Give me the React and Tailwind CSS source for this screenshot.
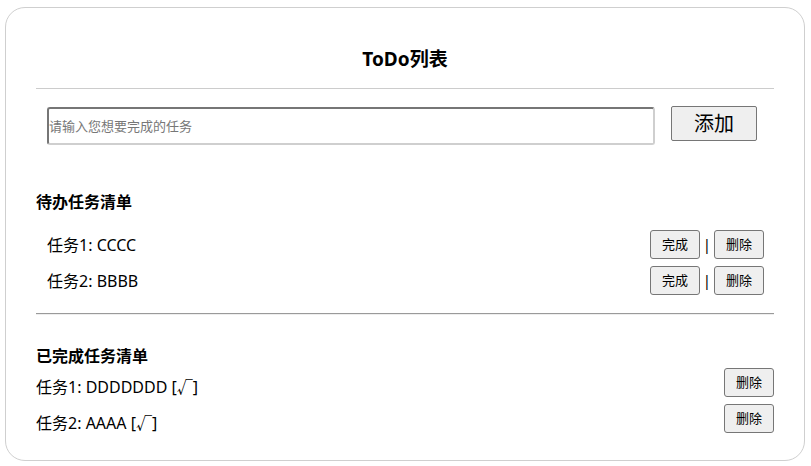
import React from 'react';

const font = { fontFamily: '"Noto Sans", "Noto Sans CJK SC", "DejaVu Sans", sans-serif' };

const todos = [
  { id: 1, name: 'CCCC' },
  { id: 2, name: 'BBBB' },
];

const dones = [
  { id: 1, name: 'DDDDDDD' },
  { id: 2, name: 'AAAA' },
];

function SmallButton({ children }) {
  return (
    <button className="w-[50px] h-[29px] text-[13px] leading-none text-black bg-[#efefef] border border-[#767676] rounded-[3px]">
      {children}
    </button>
  );
}

export default function App() {
  return (
    <div className="w-[811px] h-[466px] bg-white pt-[7px] pl-[5px]" style={font}>
      <div className="w-[800px] h-[454px] border border-[#cfcfcf] rounded-[20px] px-[30px] text-black">
        {/* Header */}
        <h1 className="pt-[37px] h-[65px] text-center text-[19px] leading-[28px] font-bold">ToDo列表</h1>
        <div className="mt-[15px] h-px bg-[#cccccc]" />

        {/* Input */}
        <div className="mt-[17px] flex items-start pl-[11px]">
          <input
            className="mt-px w-[608px] h-[38px] px-0 text-[13px] rounded-[3px] border-2 border-t-[#767676] border-l-[#767676] border-b-[#cfcfcf] border-r-[#cfcfcf] placeholder:text-[#777] outline-none"
            placeholder="请输入您想要完成的任务"
          />
          <button className="ml-[16px] w-[86px] h-[35px] text-[20px] leading-none bg-[#efefef] border border-[#767676] rounded-[2px]">
            添加
          </button>
        </div>

        {/* Pending */}
        <h2 className="mt-[45px] text-[16px] leading-[24px] font-bold">待办任务清单</h2>
        <ul className="mt-[16px] pl-[11px] pr-[10px] flex flex-col gap-[7px]">
          {todos.map((t) => (
            <li key={t.id} className="flex items-center justify-between h-[29px]">
              <span className="text-[16px]">任务{t.id}: {t.name}</span>
              <div className="flex items-center">
                <SmallButton>完成</SmallButton>
                <span className="w-[14px] text-center text-[15px] leading-none text-black">|</span>
                <SmallButton>删除</SmallButton>
              </div>
            </li>
          ))}
        </ul>
        <div className="mt-[18px] border-t border-t-[#9a9a9a] border-b border-b-[#eeeeee]" />

        {/* Done */}
        <h2 className="mt-[29px] text-[16px] leading-[24px] font-bold">已完成任务清单</h2>
        <ul className="flex flex-col gap-[7px]">
          {dones.map((t) => (
            <li key={t.id} className="flex items-end justify-between h-[29px]">
              <span className="text-[16px] leading-[22px] translate-y-[1px]">任务{t.id}: {t.name} [√]</span>
              <SmallButton>删除</SmallButton>
            </li>
          ))}
        </ul>
      </div>
    </div>
  );
}
